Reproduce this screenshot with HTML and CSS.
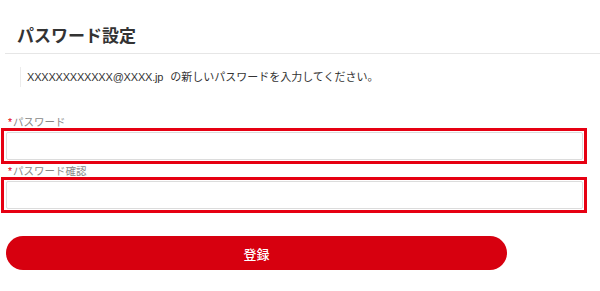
FILE: index.html
```html
<!DOCTYPE html>
<html lang="ja">
<head>
<meta charset="utf-8">
<title>パスワード設定</title>
<link rel="stylesheet" href="styles.css">
</head>
<body>
<div class="page">
  <header class="page-head">
    <h1 class="page-title">パスワード設定</h1>
  </header>
  <p class="notice"><span class="mail">XXXXXXXXXXXX@XXXX.jp</span>の新しいパスワードを入力してください。</p>
  <form class="form">
    <label class="field-label" for="pw"><span class="req">*</span>パスワード</label>
    <div class="field-box"><input class="field-input" id="pw" type="password"></div>
    <label class="field-label" for="pw2"><span class="req">*</span>パスワード確認</label>
    <div class="field-box"><input class="field-input" id="pw2" type="password"></div>
    <button class="submit" type="button">登録</button>
  </form>
</div>
</body>
</html>
```

FILE: styles.css
```css
html, body {
  margin: 0;
  padding: 0;
  background: #fff;
}
body {
  font-family: "Liberation Sans", "Noto Sans CJK JP", sans-serif;
  color: #333;
}
.page {
  width: 600px;
}
.page-head {
  margin-left: 5px;
  padding: 22px 0 5px 12px;
  border-bottom: 1px solid #e6e6e6;
}
.page-title {
  margin: 0;
  font-size: 17px;
  line-height: 26px;
  font-weight: bold;
  color: #333;
  font-family: "Noto Sans CJK JP", sans-serif;
}
.notice {
  margin: 13px 0 0 20px;
  padding-left: 6px;
  border-left: 1px solid #ececec;
  height: 20px;
  line-height: 20px;
  font-size: 11px;
  color: #333;
}
.mail {
  margin-right: 7px;
  letter-spacing: -0.2px;
}
.form {
  display: flex;
  flex-direction: column;
  align-items: flex-start;
  margin-top: 29px;
  padding-left: 1px;
}
.field-label {
  display: block;
  padding-left: 7px;
  height: 12px;
  line-height: 12px;
  font-size: 10.5px;
  color: #888;
}
.req {
  color: #e60012;
  margin-right: 1px;
}
.field-box {
  width: 577px;
  border: 3px solid #e60012;
  padding: 1px 1px 1px 2px;
  margin-bottom: 1px;
}
.field-input {
  display: block;
  box-sizing: border-box;
  width: 100%;
  height: 28px;
  margin: 0;
  border: 1px solid #dcdcdc;
  border-radius: 2px;
  background: #fff;
  outline: none;
}
.submit {
  margin: 22px 0 0 5px;
  width: 501px;
  height: 34px;
  border: none;
  border-radius: 17px;
  background: #d7000f;
  color: #fff;
  font-family: "Noto Sans CJK JP", sans-serif;
  font-size: 13px;
  font-weight: 500;
  cursor: pointer;
}
```
